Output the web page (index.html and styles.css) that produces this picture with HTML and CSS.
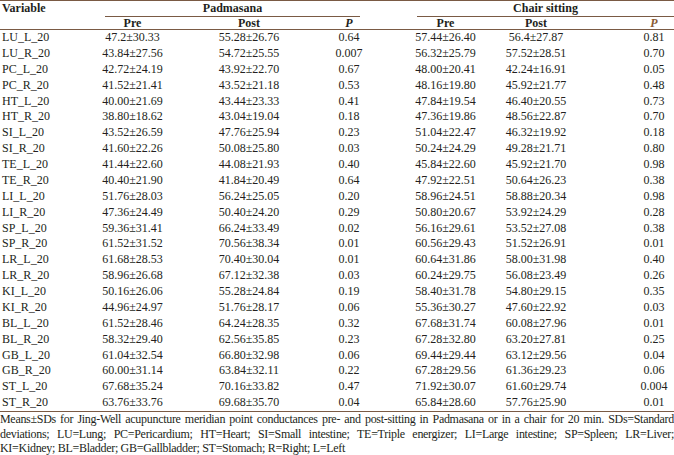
FILE: index.html
```html
<!DOCTYPE html>
<html lang="en">
<head>
<meta charset="utf-8">
<title>Jing-Well conductances</title>
<link rel="stylesheet" href="styles.css">
</head>
<body>
<div class="table">
  <div class="thead">
    <div class="row hrow1">
      <div class="c var">Variable</div>
      <div class="group pad">Padmasana</div>
      <div class="group chair">Chair sitting</div>
    </div>
    <div class="row hrow2">
      <div class="c c2">Pre</div>
      <div class="c c3">Post</div>
      <div class="c c4 p">P</div>
      <div class="c c6">Pre</div>
      <div class="c c7">Post</div>
      <div class="c c9 p p-brown">P</div>
    </div>
  </div>
  <div class="tbody">
    <div class="row drow"><div class="c var">LU_L_20</div><div class="c c2">47.2±30.33</div><div class="c c3">55.28±26.76</div><div class="c c4">0.64</div><div class="c c6">57.44±26.40</div><div class="c c7">56.4±27.87</div><div class="c c9">0.81</div></div>
    <div class="row drow"><div class="c var">LU_R_20</div><div class="c c2">43.84±27.56</div><div class="c c3">54.72±25.55</div><div class="c c4">0.007</div><div class="c c6">56.32±25.79</div><div class="c c7">57.52±28.51</div><div class="c c9">0.70</div></div>
    <div class="row drow"><div class="c var">PC_L_20</div><div class="c c2">42.72±24.19</div><div class="c c3">43.92±22.70</div><div class="c c4">0.67</div><div class="c c6">48.00±20.41</div><div class="c c7">42.24±16.91</div><div class="c c9">0.05</div></div>
    <div class="row drow"><div class="c var">PC_R_20</div><div class="c c2">41.52±21.41</div><div class="c c3">43.52±21.18</div><div class="c c4">0.53</div><div class="c c6">48.16±19.80</div><div class="c c7">45.92±21.77</div><div class="c c9">0.48</div></div>
    <div class="row drow"><div class="c var">HT_L_20</div><div class="c c2">40.00±21.69</div><div class="c c3">43.44±23.33</div><div class="c c4">0.41</div><div class="c c6">47.84±19.54</div><div class="c c7">46.40±20.55</div><div class="c c9">0.73</div></div>
    <div class="row drow"><div class="c var">HT_R_20</div><div class="c c2">38.80±18.62</div><div class="c c3">43.04±19.04</div><div class="c c4">0.18</div><div class="c c6">47.36±19.86</div><div class="c c7">48.56±22.87</div><div class="c c9">0.70</div></div>
    <div class="row drow"><div class="c var">SI_L_20</div><div class="c c2">43.52±26.59</div><div class="c c3">47.76±25.94</div><div class="c c4">0.23</div><div class="c c6">51.04±22.47</div><div class="c c7">46.32±19.92</div><div class="c c9">0.18</div></div>
    <div class="row drow"><div class="c var">SI_R_20</div><div class="c c2">41.60±22.26</div><div class="c c3">50.08±25.80</div><div class="c c4">0.03</div><div class="c c6">50.24±24.29</div><div class="c c7">49.28±21.71</div><div class="c c9">0.80</div></div>
    <div class="row drow"><div class="c var">TE_L_20</div><div class="c c2">41.44±22.60</div><div class="c c3">44.08±21.93</div><div class="c c4">0.40</div><div class="c c6">45.84±22.60</div><div class="c c7">45.92±21.70</div><div class="c c9">0.98</div></div>
    <div class="row drow"><div class="c var">TE_R_20</div><div class="c c2">40.40±21.90</div><div class="c c3">41.84±20.49</div><div class="c c4">0.64</div><div class="c c6">47.92±22.51</div><div class="c c7">50.64±26.23</div><div class="c c9">0.38</div></div>
    <div class="row drow"><div class="c var">LI_L_20</div><div class="c c2">51.76±28.03</div><div class="c c3">56.24±25.05</div><div class="c c4">0.20</div><div class="c c6">58.96±24.51</div><div class="c c7">58.88±20.34</div><div class="c c9">0.98</div></div>
    <div class="row drow"><div class="c var">LI_R_20</div><div class="c c2">47.36±24.49</div><div class="c c3">50.40±24.20</div><div class="c c4">0.29</div><div class="c c6">50.80±20.67</div><div class="c c7">53.92±24.29</div><div class="c c9">0.28</div></div>
    <div class="row drow"><div class="c var">SP_L_20</div><div class="c c2">59.36±31.41</div><div class="c c3">66.24±33.49</div><div class="c c4">0.02</div><div class="c c6">56.16±29.61</div><div class="c c7">53.52±27.08</div><div class="c c9">0.38</div></div>
    <div class="row drow"><div class="c var">SP_R_20</div><div class="c c2">61.52±31.52</div><div class="c c3">70.56±38.34</div><div class="c c4">0.01</div><div class="c c6">60.56±29.43</div><div class="c c7">51.52±26.91</div><div class="c c9">0.01</div></div>
    <div class="row drow"><div class="c var">LR_L_20</div><div class="c c2">61.68±28.53</div><div class="c c3">70.40±30.04</div><div class="c c4">0.01</div><div class="c c6">60.64±31.86</div><div class="c c7">58.00±31.98</div><div class="c c9">0.40</div></div>
    <div class="row drow"><div class="c var">LR_R_20</div><div class="c c2">58.96±26.68</div><div class="c c3">67.12±32.38</div><div class="c c4">0.03</div><div class="c c6">60.24±29.75</div><div class="c c7">56.08±23.49</div><div class="c c9">0.26</div></div>
    <div class="row drow"><div class="c var">KI_L_20</div><div class="c c2">50.16±26.06</div><div class="c c3">55.28±24.84</div><div class="c c4">0.19</div><div class="c c6">58.40±31.78</div><div class="c c7">54.80±29.15</div><div class="c c9">0.35</div></div>
    <div class="row drow"><div class="c var">KI_R_20</div><div class="c c2">44.96±24.97</div><div class="c c3">51.76±28.17</div><div class="c c4">0.06</div><div class="c c6">55.36±30.27</div><div class="c c7">47.60±22.92</div><div class="c c9">0.03</div></div>
    <div class="row drow"><div class="c var">BL_L_20</div><div class="c c2">61.52±28.46</div><div class="c c3">64.24±28.35</div><div class="c c4">0.32</div><div class="c c6">67.68±31.74</div><div class="c c7">60.08±27.96</div><div class="c c9">0.01</div></div>
    <div class="row drow"><div class="c var">BL_R_20</div><div class="c c2">58.32±29.40</div><div class="c c3">62.56±35.85</div><div class="c c4">0.23</div><div class="c c6">67.28±32.80</div><div class="c c7">63.20±27.81</div><div class="c c9">0.25</div></div>
    <div class="row drow"><div class="c var">GB_L_20</div><div class="c c2">61.04±32.54</div><div class="c c3">66.80±32.98</div><div class="c c4">0.06</div><div class="c c6">69.44±29.44</div><div class="c c7">63.12±29.56</div><div class="c c9">0.04</div></div>
    <div class="row drow"><div class="c var">GB_R_20</div><div class="c c2">60.00±31.14</div><div class="c c3">63.84±32.11</div><div class="c c4">0.22</div><div class="c c6">67.28±29.56</div><div class="c c7">61.36±29.23</div><div class="c c9">0.06</div></div>
    <div class="row drow"><div class="c var">ST_L_20</div><div class="c c2">67.68±35.24</div><div class="c c3">70.16±33.82</div><div class="c c4">0.47</div><div class="c c6">71.92±30.07</div><div class="c c7">61.60±29.74</div><div class="c c9">0.004</div></div>
    <div class="row drow"><div class="c var">ST_R_20</div><div class="c c2">63.76±33.76</div><div class="c c3">69.68±35.70</div><div class="c c4">0.04</div><div class="c c6">65.84±28.60</div><div class="c c7">57.76±25.90</div><div class="c c9">0.01</div></div>
  </div>
</div>
<p class="caption">Means±SDs for Jing-Well acupuncture meridian point conductances pre- and post-sitting in Padmasana or in a chair for 20 min. SDs=Standard deviations; LU=Lung; PC=Pericardium; HT=Heart; SI=Small intestine; TE=Triple energizer; LI=Large intestine; SP=Spleen; LR=Liver; KI=Kidney; BL=Bladder; GB=Gallbladder; ST=Stomach; R=Right; L=Left</p>
</body>
</html>
```

FILE: styles.css
```css
html, body {
  margin: 0;
  padding: 0;
  background: #ffffff;
}
body {
  font-family: "Liberation Serif", "Times New Roman", serif;
  font-size: 12px;
  color: #231f20;
  width: 674px;
}
.table {
  width: 674px;
}
.thead {
  border-top: 1px solid #7a5a44;
  border-bottom: 1px solid #7a5a44;
}
.tbody {
  border-bottom: 1px solid #7a5a44;
}
.row {
  display: grid;
  grid-template-columns: 105px 55px 178px 22px 57px 57px 124px 36px 40px;
  align-items: center;
}
.hrow1 {
  height: 16px;
  font-weight: bold;
}
.hrow2 {
  height: 12px;
  font-weight: bold;
  line-height: 12px;
}
.drow {
  height: 15.875px;
  line-height: 15.875px;
}
.c {
  white-space: nowrap;
  justify-self: center;
}
.var {
  grid-column: 1;
  justify-self: start;
  padding-left: 2px;
}
.hrow1 .var {
  align-self: start;
  line-height: 15px;
}
.c2 { grid-column: 2; }
.c3 { grid-column: 3; }
.c4 { grid-column: 4; }
.c6 { grid-column: 6; }
.c7 { grid-column: 7; }
.c9 { grid-column: 9; }
.group {
  align-self: stretch;
  text-align: center;
  line-height: 15px;
  border-bottom: 1px solid #7a5a44;
}
.pad {
  grid-column: 2 / 5;
}
.chair {
  grid-column: 6 / 10;
}
.p {
  font-style: italic;
}
.p-brown {
  color: #8a5a32;
}
.caption {
  margin: 0;
  padding: 0;
  line-height: 14.5px;
  letter-spacing: -0.3px;
  text-align: justify;
}
```
